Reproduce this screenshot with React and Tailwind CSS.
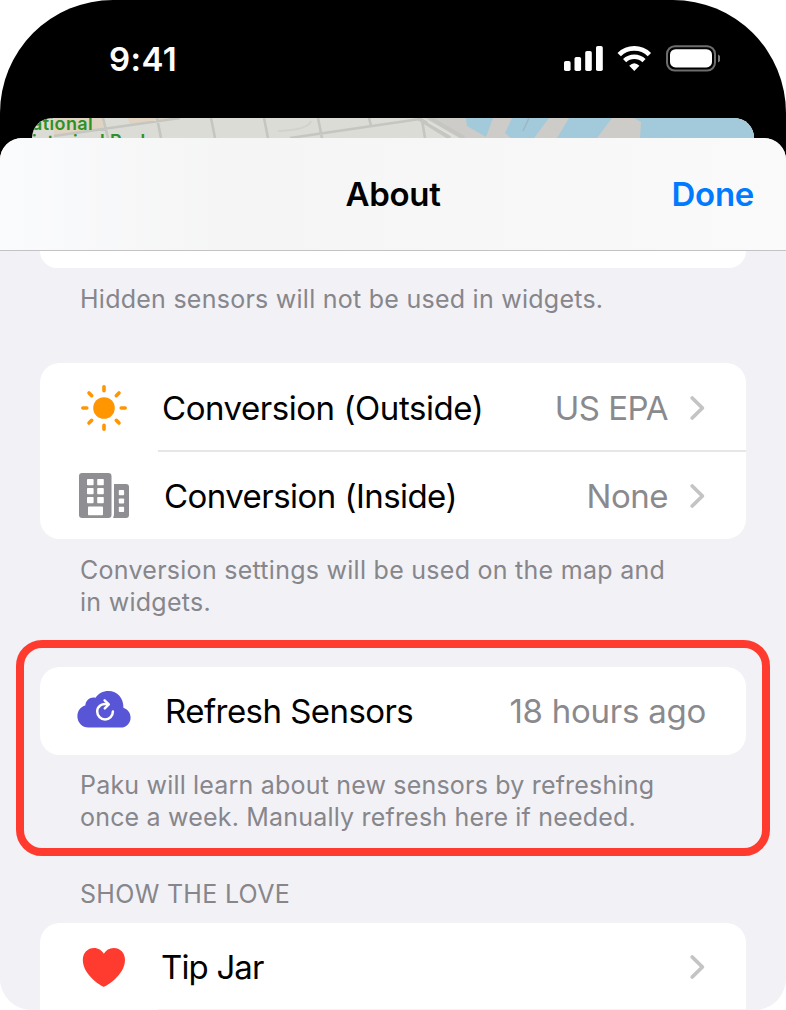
import React from "react";

function StatusIcons() {
  return (
    <svg className="block" width="160" height="32" viewBox="560 42 160 32">
      <g fill="#fff">
        <rect x="564" y="61" width="6.6" height="10" rx="1.8" />
        <rect x="574.5" y="57" width="6.6" height="14" rx="1.8" />
        <rect x="585.2" y="51" width="6.6" height="20" rx="1.8" />
        <rect x="596" y="46" width="6.8" height="25" rx="1.8" />
        <path d="M634.3 71 L629.2 65.8 Q634.3 60.6 639.4 65.8 Z" />
        <rect x="670" y="49.2" width="42" height="18.2" rx="5.5" />
      </g>
      <path d="M619.2 54.6 A21.6 21.6 0 0 1 649.4 54.6" fill="none" stroke="#fff" strokeWidth="4.8" />
      <path d="M624.6 60.6 A14 14 0 0 1 644 60.6" fill="none" stroke="#fff" strokeWidth="4.6" />
      <rect x="667" y="46.2" width="48" height="24.4" rx="7.8" fill="none" stroke="#6d6d6b" strokeWidth="2" />
      <path d="M718 54.5 Q721 56 721 58.5 Q721 61 718 62.5 Z" fill="#777" />
    </svg>
  );
}

function MapStrip() {
  return (
    <div className="relative mx-8 h-5 overflow-hidden rounded-t-[20px] bg-[#dbdcd6]">
      <svg className="block" width="722" height="20" viewBox="32 118 722 20">
        <path d="M54 118 H103 L106 130 L54 136 Z M128 118 H172 L130 124 Z" fill="#e0d3c2" />
        <path d="M425 118 H754 V138 H460 Z" fill="#cdccc8" />
        <path d="M466 118 H493 L486 137 L467 126 Z M512 118 H549 L534 138 H511 L505 133 Z M569 118 H612 L597 138 H557 Z M634 118 H754 V138 H640 L641 122 Z" fill="#a3cadb" />
        <g fill="none" stroke="#c5c6c1" strokeWidth="2.6">
          <path d="M54 136 L180 118 M290 138 L420 119 M103 118 L108 138 M157 118 L161 138 M211 118 L215 138 M264 118 L268 138 M318 118 L322 138 M369 118 L371 126 M422 120 L425 138" />
          <path d="M418 118 L450 138 M430 118 L464 138" strokeWidth="4" />
          <path d="M278 131 Q308 130 311 121" strokeWidth="2" stroke="#d1d2cc" />
          <path d="M529 118 L523 131" stroke="#9cb8c4" strokeWidth="1.5" />
        </g>
        <path d="M428 122 L456 138" stroke="#dededa" strokeWidth="1.5" />
      </svg>
      <div className="absolute -top-[3px] left-0 whitespace-nowrap text-[18px] leading-[18px] font-semibold tracking-[0.4px] text-[#2d9128]">
        <div>ational</div>
        <div>istorical Park</div>
      </div>
    </div>
  );
}

function Chevron() {
  return (
    <svg className="ml-[19px] block shrink-0" width="20" height="28" viewBox="0 0 20 28">
      <path d="M5.2 4 L15.4 14 L5.2 24" fill="none" stroke="#c4c4c7" strokeWidth="3.8" strokeLinecap="round" strokeLinejoin="round" />
    </svg>
  );
}

function Sun() {
  return (
    <svg width="56" height="56" viewBox="-28 -28 56 56">
      <circle r="10.8" fill="#ff9500" />
      <g stroke="#ff9500" strokeWidth="3.6" strokeLinecap="round">
        <path d="M0 -21.2V-17.2M0 17.2V21.2M-21.2 0H-17.2M17.2 0H21.2M-15 -15L-12.3 -12.3M15 -15L12.3 -12.3M-15 15L-12.3 12.3M15 15L12.3 12.3" />
      </g>
    </svg>
  );
}

function Buildings() {
  return (
    <svg width="56" height="56" viewBox="76 468 56 56">
      <rect x="79" y="473" width="32.5" height="45" rx="3.2" fill="#8e8e93" />
      <path d="M114 484 H126 Q129 484 129 487 V515 Q129 518 126 518 H113 Q114 516 114 514 Z" fill="#8e8e93" />
      <g fill="#fff">
        <rect x="87" y="479" width="6.6" height="6.3" rx=".8" />
        <rect x="97.2" y="479" width="6.6" height="6.3" rx=".8" />
        <rect x="87" y="488" width="6.6" height="6.3" rx=".8" />
        <rect x="97.2" y="488" width="6.6" height="6.3" rx=".8" />
        <rect x="87" y="497" width="6.6" height="6.3" rx=".8" />
        <rect x="97.2" y="497" width="6.6" height="6.3" rx=".8" />
        <rect x="88" y="506.6" width="15" height="8.6" rx=".8" />
        <rect x="118.8" y="490" width="5.3" height="5.2" rx=".8" />
        <rect x="118.8" y="498.4" width="5.3" height="5.2" rx=".8" />
        <rect x="118.8" y="506.8" width="5.3" height="5.2" rx=".8" />
      </g>
    </svg>
  );
}

function CloudRefresh() {
  return (
    <svg width="56" height="56" viewBox="76 683 56 56">
      <path d="M88.5 727.6 H120.5 C126.2 727.6 130.6 723.2 130.6 717.7 C130.6 713 127.7 709.2 123.4 707.8 C123.7 698 117.3 691 108.6 691 C102.8 691 98.2 693.6 95.6 697.8 C90.5 696.5 85.6 700.3 85.3 705.6 C80.6 706.7 77.4 711 77.4 716.3 C77.4 722.6 82.2 727.6 88.5 727.6 Z" fill="#5856d6" />
      <g fill="none" stroke="#fff" strokeWidth="2.5" strokeLinecap="round" strokeLinejoin="round">
        <path d="M107.6 704.2 C101.8 702.8 97.2 706.5 97.2 711.4 C97.2 715.9 100.8 719.5 105.1 719.5 C109.4 719.5 112.9 715.9 112.9 711.6" />
        <path d="M104.6 700.4 L108.8 704.4 L104.8 708.4" />
      </g>
    </svg>
  );
}

function Heart() {
  return (
    <svg width="56" height="56" viewBox="76 939 56 56">
      <path d="M103.8 986.8 C102.6 986.8 82.8 975.5 82.8 960 C82.8 952.8 87.7 948 94 948 C98.4 948 101.8 950.3 103.8 953.8 C105.9 950.3 109.3 948 113.7 948 C120.1 948 125 952.8 125 960 C125 975.5 105.1 986.8 103.8 986.8 Z" fill="#ff3b30" />
    </svg>
  );
}

function Row({ icon, label, labelClass, value, valueClass, chevron }) {
  return (
    <div className="flex h-[88px] items-center pr-[39px] pl-9">
      <div className="w-[56px] shrink-0">{icon}</div>
      <div className={"grow whitespace-nowrap text-[33px] leading-[44px] text-black " + labelClass}>{label}</div>
      {value && <div className={"whitespace-nowrap text-[33px] leading-[44px] text-[#8a8a8e] " + valueClass}>{value}</div>}
      {chevron && <Chevron />}
    </div>
  );
}

function Note({ children, className }) {
  return <div className={"whitespace-nowrap text-[25px] leading-8 text-[#86868b] " + className}>{children}</div>;
}

export default function App() {
  return (
    <div className="h-[1010px] w-[786px] overflow-hidden bg-white font-['Inter',sans-serif]">
      <div className="flex h-full flex-col overflow-hidden rounded-t-[113px] rounded-b-[32px] bg-linear-to-b from-black from-50% to-[#f2f1f6] to-50%">
        <div className="flex h-[118px] shrink-0 items-start justify-between pt-[42px] pr-[66px] pl-[109px]">
          <div className="text-[33px] leading-[34px] font-semibold tracking-[0.4px] text-white">9:41</div>
          <StatusIcons />
        </div>
        <MapStrip />
        <div className="flex min-h-0 grow flex-col overflow-hidden rounded-t-[22px] bg-[#f2f1f6]">
          <header className="grid h-[113px] shrink-0 grid-cols-[1fr_auto_1fr] items-center border-b border-[#c3c3c6] bg-linear-to-r from-[#fafbfd] via-[#f5f5f5] via-30% to-[#fafafa] px-8 pt-[2px] text-[33px] font-semibold">
            <div />
            <h1 className="tracking-[-0.3px]">About</h1>
            <button className="justify-self-end tracking-[-0.3px] text-[#007aff]">Done</button>
          </header>
          <div className="mx-10 h-[17px] shrink-0 rounded-b-[20px] bg-white" />
          <Note className="mt-[15px] ml-20 tracking-[0.255px]">Hidden sensors will not be used in widgets.</Note>

          <section className="mx-10 mt-12 h-[176px] shrink-0 rounded-[20px] bg-white pt-px">
            <Row icon={<Sun />} label="Conversion (Outside)" labelClass="ml-[30px] tracking-[-0.45px]" value="US EPA" valueClass="tracking-[-0.5px]" chevron />
            <div className="-mt-[2px] ml-[118px] h-[2px] bg-[#e6e6e8]" />
            <Row icon={<Buildings />} label="Conversion (Inside)" labelClass="ml-[32px] tracking-[-0.55px]" value="None" valueClass="tracking-[-0.5px]" chevron />
          </section>
          <Note className="mt-[15px] ml-20 tracking-[0.27px]">Conversion settings will be used on the map and<br />in widgets.</Note>

          <section className="mx-4 mt-[22px] h-[216px] shrink-0 rounded-[26px] border-8 border-[#ff3b30] px-4 pt-[19px]">
            <div className="rounded-[20px] bg-white">
              <Row icon={<CloudRefresh />} label="Refresh Sensors" labelClass="ml-[33px] tracking-[-0.55px]" value="18 hours ago" valueClass="mr-px tracking-[-0.25px]" />
            </div>
            <Note className="mt-[14px] ml-10 tracking-[0.19px]">Paku will learn about new sensors by refreshing<br />once a week. Manually refresh here if needed.</Note>
          </section>

          <Note className="mt-[22px] ml-20 tracking-[0.3px]">SHOW THE LOVE</Note>
          <section className="mx-10 mt-[13px] h-[87px] shrink-0 rounded-t-[20px] bg-white">
            <Row icon={<Heart />} label="Tip Jar" labelClass="ml-[29px] tracking-[-0.85px]" chevron />
            <div className="-mt-[2px] ml-[118px] h-px bg-[#f3f3f4]" />
          </section>
        </div>
      </div>
    </div>
  );
}
